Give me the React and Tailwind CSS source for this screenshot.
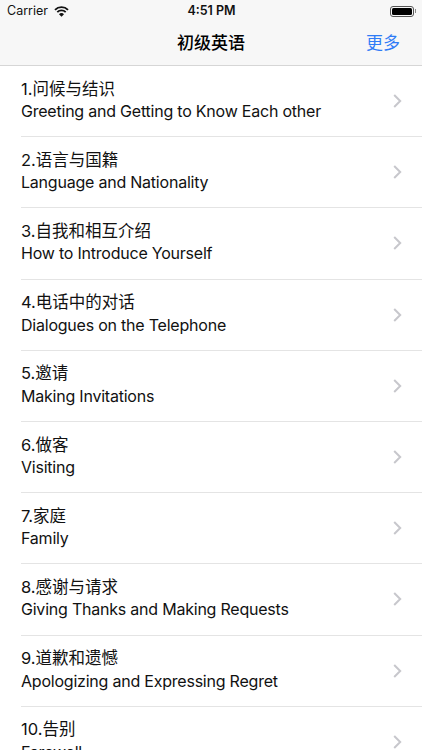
const lessons = [
  ["1.问候与结识", "Greeting and Getting to Know Each other"],
  ["2.语言与国籍", "Language and Nationality"],
  ["3.自我和相互介绍", "How to Introduce Yourself"],
  ["4.电话中的对话", "Dialogues on the Telephone"],
  ["5.邀请", "Making Invitations"],
  ["6.做客", "Visiting"],
  ["7.家庭", "Family"],
  ["8.感谢与请求", "Giving Thanks and Making Requests"],
  ["9.道歉和遗憾", "Apologizing and Expressing Regret"],
  ["10.告别", "Farewell"],
];

const App = () => {
  return (
    <div className="h-[750px] w-[422px] overflow-hidden bg-white font-['Inter','Noto_Sans_CJK_SC',sans-serif] text-black">
      {/* Status bar */}
      <div className="bg-[#f7f7f7]">
        <div className="flex h-[22px] items-center pl-[7px] pr-[6px] text-[12.5px] leading-none text-[#111]">
          <div className="flex flex-1 items-center gap-[6px]">
            <span>Carrier</span>
            <svg width="15" height="11" viewBox="0 0 15 11" fill="none" stroke="#111" strokeWidth="1.9">
              <path d="M1 3.8 A9.2 9.2 0 0 1 14 3.8" />
              <path d="M3.3 6.1 A6 6 0 0 1 11.7 6.1" />
              <path d="M7.5 10.8 L5 8.2 A3.4 3.4 0 0 1 10 8.2 Z" fill="#111" stroke="none" />
            </svg>
          </div>
          <span className="font-semibold">4:51 PM</span>
          <div className="flex flex-1 items-center justify-end">
            <div className="h-[11px] w-[24px] rounded-[3px] border border-[#555] p-[1px]">
              <div className="h-full w-full rounded-[1.5px] bg-black" />
            </div>
            <div className="ml-[1px] h-[4px] w-[1px] bg-[#888]" />
          </div>
        </div>
        {/* Nav bar */}
        <div className="relative flex h-[44px] items-center justify-center border-b border-[#d6d6d6]">
          <span className="text-[17px] font-medium">初级英语</span>
          <span className="absolute right-[22px] text-[17px] text-[#2f7cf6]">更多</span>
        </div>
      </div>
      {/* Lesson list */}
      <ul>
        {lessons.map(([title, subtitle]) => (
          <li key={title} className="pl-[21px]">
            <div className="flex h-[71.2px] items-center justify-between border-b border-[#e4e4e4] pr-[20px]">
              <div className="mb-[2px] leading-[22.5px] text-[#111]">
                <div className="text-[16.5px]">{title}</div>
                <div className="text-[16px] tracking-[-0.22px]">{subtitle}</div>
              </div>
              <svg width="9" height="14" viewBox="0 0 9 14" fill="none">
                <path d="M1.2 1 L7.2 7 L1.2 13" stroke="#c7c7cc" strokeWidth="2" />
              </svg>
            </div>
          </li>
        ))}
      </ul>
    </div>
  );
};

export default App;
